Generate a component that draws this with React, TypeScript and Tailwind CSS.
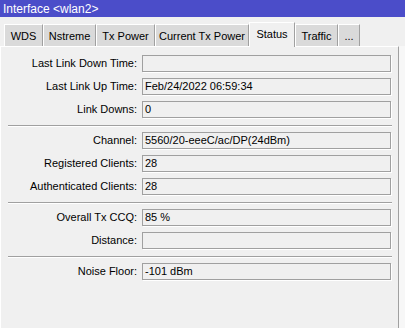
const tabs = [
  { label: 'WDS', w: 'w-[39px]' },
  { label: 'Nstreme', w: 'w-[53px]' },
  { label: 'Tx Power', w: 'w-[59px]' },
  { label: 'Current Tx Power', w: 'w-[94px]' },
  { label: 'Status', w: 'w-[46px]', active: true },
  { label: 'Traffic', w: 'w-[43px]' },
  { label: '...', w: 'w-[22px]' },
];

type Row = { label: string; value: string } | 'sep';

const rows: Row[] = [
  { label: 'Last Link Down Time:', value: '' },
  { label: 'Last Link Up Time:', value: 'Feb/24/2022 06:59:34' },
  { label: 'Link Downs:', value: '0' },
  'sep',
  { label: 'Channel:', value: '5560/20-eeeC/ac/DP(24dBm)' },
  { label: 'Registered Clients:', value: '28' },
  { label: 'Authenticated Clients:', value: '28' },
  'sep',
  { label: 'Overall Tx CCQ:', value: '85 %' },
  { label: 'Distance:', value: '' },
  'sep',
  { label: 'Noise Floor:', value: '-101 dBm' },
];

export default function App() {
  return (
    <div
      className="w-[405px] h-[328px] overflow-hidden bg-[#f0f0f0] text-[11px] text-black"
      style={{ fontFamily: '"Liberation Sans", Arial, sans-serif' }}
    >
      {/* title bar */}
      <div className="h-[17px] bg-[#4b4dc9] text-white flex items-center pl-[3px] text-[12px]">
        Interface &lt;wlan2&gt;
      </div>

      {/* tabs */}
      <div className="h-[29px] flex items-end pl-[4px]">
        {tabs.map(t =>
          t.active ? (
            <div
              key={t.label}
              className={`${t.w} h-[25px] -mb-[1px] relative z-10 bg-[#f0f0f0] border-t border-l border-white border-r border-r-[#a0a0a0] flex items-start justify-center pt-[3px]`}
            >
              {t.label}
            </div>
          ) : (
            <div
              key={t.label}
              className={`${t.w} h-[22px] bg-[#dadada] border-t border-l border-white border-r border-r-[#a0a0a0] flex items-center justify-center pt-[1px]`}
            >
              {t.label}
            </div>
          )
        )}
      </div>

      {/* panel */}
      <div className="flex">
        <div className="w-[399px] h-[290px] border-t border-l border-white border-r border-r-[#a0a0a0] pt-[8px]">
          {rows.map((r, i) =>
            r === 'sep' ? (
              <div key={i} className="ml-[7px] w-[384px] mt-[7px] mb-[5px] h-[2px] border-t border-[#a0a0a0] border-b border-b-white" />
            ) : (
              <div key={i} className={`flex items-center ${i === 0 || rows[i - 1] === 'sep' ? '' : 'mt-[6px]'}`}>
                <div className="w-[136px] text-right whitespace-nowrap">{r.label}</div>
                <div className="ml-[5px] w-[249px] h-[17px] border border-[#a0a0a0] shadow-[1px_1px_0_#ffffff] flex items-center pl-[2px] whitespace-nowrap">
                  {r.value}
                </div>
              </div>
            )
          )}
        </div>
        <div className="flex-1 bg-[#f7f7f7]" />
      </div>
    </div>
  );
}
